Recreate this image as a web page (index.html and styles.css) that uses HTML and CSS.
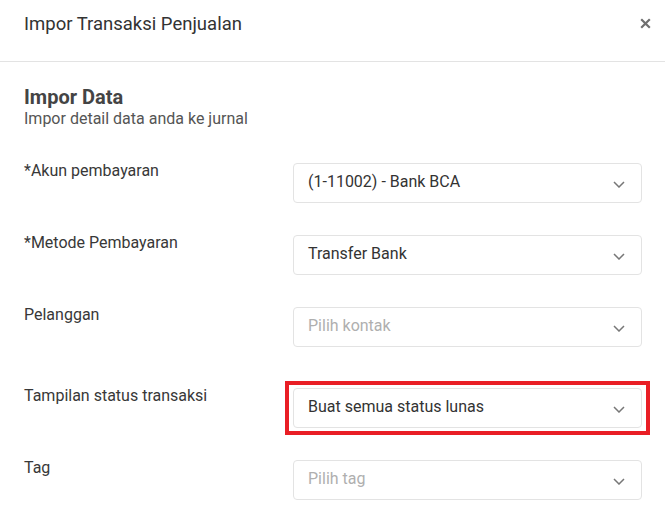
FILE: index.html
```html
<!DOCTYPE html>
<html lang="id">
<head>
  <meta charset="UTF-8">
  <title>Impor Transaksi Penjualan</title>
  <link rel="stylesheet" href="styles.css">
</head>
<body>

  <header class="modal-header">
    <span class="modal-title">Impor Transaksi Penjualan</span>
    <button class="close-btn" aria-label="Tutup">
      <svg width="11" height="11" viewBox="0 0 11 11"><path d="M1.2 1.2l8.6 8.6M9.8 1.2l-8.6 8.6" stroke="#6f6f6f" stroke-width="2.2"/></svg>
    </button>
  </header>

  <div class="modal-body">
    <h2 class="section-title">Impor Data</h2>
    <p class="section-sub">Impor detail data anda ke jurnal</p>

    <div class="form-row first-row">
      <label class="form-label">*Akun pembayaran</label>
      <div class="select">
        <span>(1-11002) - Bank BCA</span>
        <svg class="chev" width="12" height="7" viewBox="0 0 12 7"><path d="M1 1l5 5 5-5" fill="none" stroke="#777" stroke-width="1.5"/></svg>
      </div>
    </div>

    <div class="form-row">
      <label class="form-label">*Metode Pembayaran</label>
      <div class="select">
        <span>Transfer Bank</span>
        <svg class="chev" width="12" height="7" viewBox="0 0 12 7"><path d="M1 1l5 5 5-5" fill="none" stroke="#777" stroke-width="1.5"/></svg>
      </div>
    </div>

    <div class="form-row">
      <label class="form-label">Pelanggan</label>
      <div class="select">
        <span class="placeholder">Pilih kontak</span>
        <svg class="chev" width="12" height="7" viewBox="0 0 12 7"><path d="M1 1l5 5 5-5" fill="none" stroke="#777" stroke-width="1.5"/></svg>
      </div>
    </div>

    <!-- highlighted row -->
    <div class="form-row highlight-row">
      <label class="form-label">Tampilan status transaksi</label>
      <div class="select highlighted">
        <span>Buat semua status lunas</span>
        <svg class="chev" width="12" height="7" viewBox="0 0 12 7"><path d="M1 1l5 5 5-5" fill="none" stroke="#777" stroke-width="1.5"/></svg>
      </div>
    </div>

    <div class="form-row">
      <label class="form-label">Tag</label>
      <div class="select">
        <span class="placeholder">Pilih tag</span>
        <svg class="chev" width="12" height="7" viewBox="0 0 12 7"><path d="M1 1l5 5 5-5" fill="none" stroke="#777" stroke-width="1.5"/></svg>
      </div>
    </div>
  </div>

</body>
</html>
```

FILE: styles.css
```css
body {
  font-family: Roboto, "Liberation Sans", sans-serif;
  background: #ffffff;
  color: #333;
  margin: 0;
  padding: 0;
}

.modal-header {
  display: flex;
  align-items: flex-start;
  justify-content: space-between;
  height: 48px;
  padding: 13px 14px 0 24px;
  border-bottom: 1px solid #e3e3e3;
}

.modal-title {
  font-size: 18.5px;
  line-height: 22px;
  color: #333;
}

.close-btn {
  border: none;
  background: none;
  padding: 0;
  width: 11px;
  height: 11px;
  margin-top: 5px;
  cursor: pointer;
}

.close-btn svg {
  display: block;
}

.modal-body {
  padding: 25px 23px 0 24px;
}

.section-title {
  font-size: 20px;
  font-weight: 700;
  color: #444;
  margin: 0;
  line-height: 20px;
}

.section-sub {
  font-size: 16px;
  color: #555;
  margin: 3px 0 0;
  line-height: 18px;
}

.form-row {
  display: flex;
  justify-content: space-between;
  align-items: flex-start;
  margin-top: 31px;
}

.form-row.first-row {
  margin-top: 34px;
}

.form-row.highlight-row {
  margin-top: 40px;
}

.form-label {
  font-size: 16px;
  color: #383838;
  line-height: 18px;
}

.select {
  position: relative;
  width: 349px;
  height: 40px;
  box-sizing: border-box;
  border: 1px solid #e3e3e3;
  border-radius: 4px;
  display: flex;
  align-items: center;
  justify-content: space-between;
  padding: 0 16px 0 14px;
  font-size: 16px;
  color: #333;
  margin-top: 1px;
}

.select span {
  margin-bottom: 3px;
}

.select .placeholder {
  color: #afafaf;
}

.chev {
  display: block;
  margin-top: 2px;
}

.select.highlighted::after {
  content: "";
  position: absolute;
  left: -9px;
  right: -9px;
  top: -8px;
  bottom: -8px;
  border: 4px solid #e91e25;
}
```
